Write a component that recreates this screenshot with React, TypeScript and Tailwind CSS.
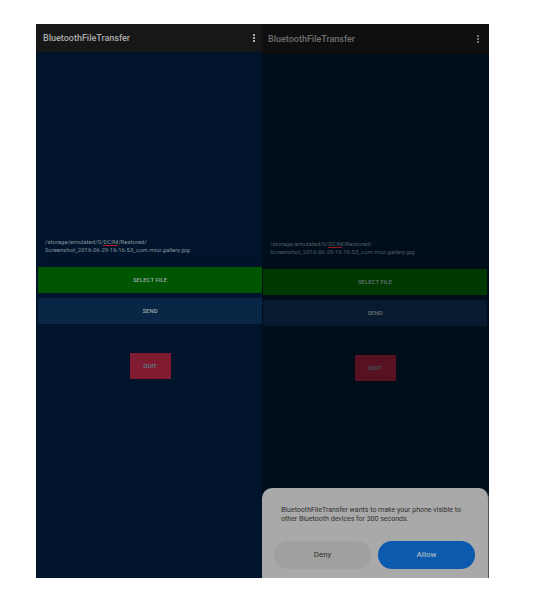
import React from "react";

type Tone = {
  panel: string;
  bar: string;
  body: string;
  text: string;
  line: string;
  select: string;
  send: string;
  label: string;
  quit: string;
  mark: string;
};

const bright: Tone = {
  panel: "bg-[#00152b]",
  bar: "h-7 bg-[#171717] pl-[7px] pr-1 text-[#acacac]",
  body: "pl-0.5",
  text: "text-[#83929b]",
  line: "border-[#000f20]",
  select: "bg-[#005500]",
  send: "bg-[#0a2646]",
  label: "text-[#9aa6a8]",
  quit: "bg-[#801b32] text-[#5c8790]",
  mark: "bg-[#c01e28]",
};

const dimmed: Tone = {
  panel: "bg-[#000d1b]",
  bar: "h-[30px] bg-[#0f0f0f] pl-1.5 pr-[7px] text-[#707070]",
  body: "pl-px pr-0.5",
  text: "text-[#505d62]",
  line: "border-[#00070f]",
  select: "bg-[#003900]",
  send: "bg-[#071a30]",
  label: "text-[#646f72]",
  quit: "bg-[#561220] text-[#3d5d64]",
  mark: "bg-[#901820]",
};

const path =
  "/storage/emulated/0/DCIM/Restored/\nScreenshot_2016-06-29-16-16-53_com.miui.gallery.jpg";

function Phone({ tone, children }: { tone: Tone; children?: React.ReactNode }) {
  return (
    <section className={`flex min-h-[554px] min-w-0 flex-col ${tone.panel}`}>
      <header className={`flex shrink-0 items-center justify-between ${tone.bar}`}>
        <h1 className="text-[9px] font-medium leading-3">BluetoothFileTransfer</h1>
        <button type="button" aria-label="More options" className="flex w-2 flex-col items-center gap-px">
          <span className="size-0.5 bg-current" />
          <span className="size-0.5 bg-current" />
          <span className="size-0.5 bg-current" />
        </button>
      </header>
      <div className={`flex flex-col ${tone.body}`}>
        <div className={`relative mx-1 mt-[186px] border-b pl-[3px] ${tone.line}`}>
          <textarea
            aria-label="File path"
            spellCheck={false}
            defaultValue={path}
            className={`block h-[19px] w-full resize-none overflow-hidden whitespace-pre bg-transparent text-[6px] leading-2 outline-none ${tone.text}`}
          />
          <span className={`absolute left-[61px] top-[7px] h-px w-3.5 ${tone.mark}`} />
        </div>
        <button type="button" className={`mt-[9px] h-[26px] pb-px text-[6px] font-medium ${tone.select} ${tone.label}`}>
          SELECT FILE
        </button>
        <button type="button" className={`mt-[5px] h-[26px] pb-px text-[6px] font-medium ${tone.send} ${tone.label}`}>
          SEND
        </button>
        <button type="button" className={`mt-[29px] h-[26px] w-[41px] self-center pb-px text-[6px] font-medium ${tone.quit}`}>
          QUIT
        </button>
      </div>
      {children}
    </section>
  );
}

export default function App() {
  return (
    <main className="min-h-screen bg-white pl-9 pr-[71px] pt-6 font-['Roboto',sans-serif]">
      <div className="grid grid-cols-[226fr_227fr]">
        <Phone tone={bright} />
        <Phone tone={dimmed}>
          <div
            role="dialog"
            aria-label="Bluetooth visibility"
            className="mt-auto rounded-t-[10px] border-r border-[#555555] bg-[#a9a9a9] pb-[9px] pl-3 pr-[11px] pt-[18px] text-[#303030]"
          >
            <p className="px-[7px] text-[7px] leading-[9px]">
              BluetoothFileTransfer wants to make your phone visible to other Bluetooth devices for 300 seconds.
            </p>
            <div className="mt-[17px] flex gap-[7px] pr-0.5">
              <button type="button" className="h-7 flex-1 rounded-full bg-[#a0a0a0] text-[8px]">
                Deny
              </button>
              <button type="button" className="h-7 flex-1 rounded-full bg-[#0b5aae] text-[8px] font-medium text-[#a5b5c5]">
                Allow
              </button>
            </div>
          </div>
        </Phone>
      </div>
    </main>
  );
}
